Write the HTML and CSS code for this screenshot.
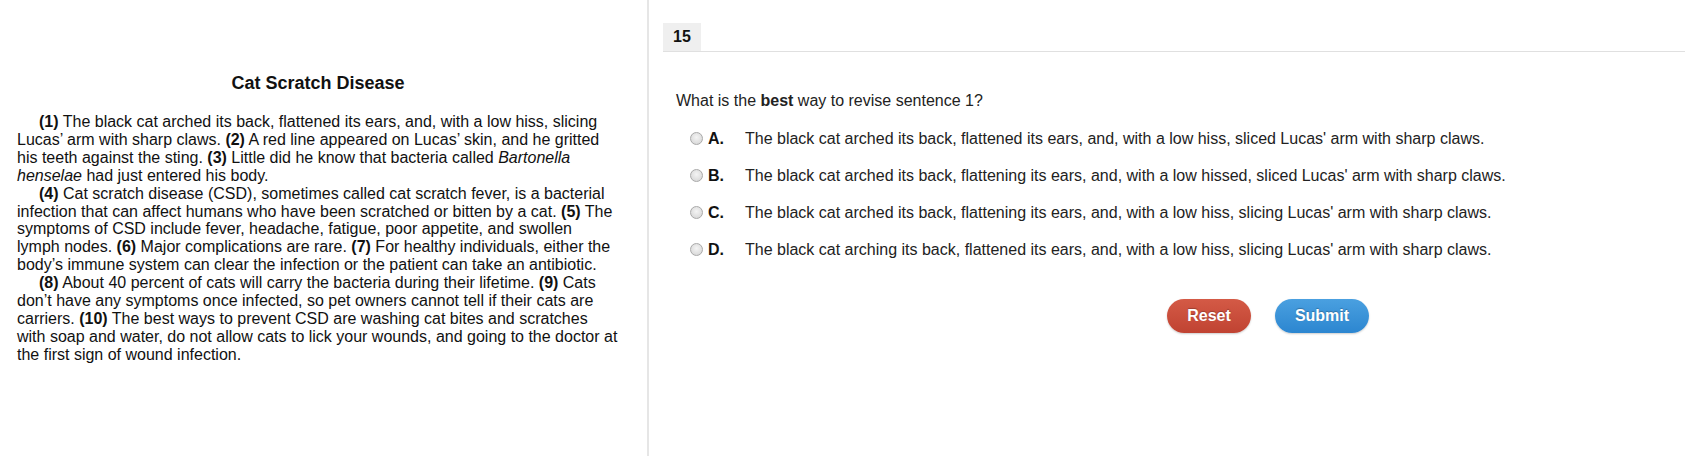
FILE: index.html
```html
<!DOCTYPE html>
<html>
<head>
<meta charset="utf-8">
<link rel="stylesheet" href="styles.css">
</head>
<body>
<div class="page">
  <section class="passage">
    <h1 class="title">Cat Scratch Disease</h1>
    <p class="para"><b>(1)</b> The black cat arched its back, flattened its ears, and, with a low hiss, slicing Lucas’ arm with sharp claws. <b>(2)</b> A red line appeared on Lucas’ skin, and he gritted his teeth against the sting. <b>(3)</b> Little did he know that bacteria called <i>Bartonella henselae</i> had just entered his body.</p>
    <p class="para"><b>(4)</b> Cat scratch disease (CSD), sometimes called cat scratch fever, is a bacterial infection that can affect humans who have been scratched or bitten by a cat. <b>(5)</b> The symptoms of CSD include fever, headache, fatigue, poor appetite, and swollen lymph nodes. <b>(6)</b> Major complications are rare. <b>(7)</b> For healthy individuals, either the body’s immune system can clear the infection or the patient can take an antibiotic.</p>
    <p class="para"><b>(8)</b> About 40 percent of cats will carry the bacteria during their lifetime. <b>(9)</b> Cats don’t have any symptoms once infected, so pet owners cannot tell if their cats are carriers. <b>(10)</b> The best ways to prevent CSD are washing cat bites and scratches with soap and water, do not allow cats to lick your wounds, and going to the doctor at the first sign of wound infection.</p>
  </section>
  <section class="question">
    <div class="tabbar"><div class="tab">15</div></div>
    <p class="prompt">What is the <b>best</b> way to revise sentence 1?</p>
    <div class="options">
      <label class="option"><span class="radio"></span><span class="letter">A.</span><span class="otext">The black cat arched its back, flattened its ears, and, with a low hiss, sliced Lucas' arm with sharp claws.</span></label>
      <label class="option"><span class="radio"></span><span class="letter">B.</span><span class="otext">The black cat arched its back, flattening its ears, and, with a low hissed, sliced Lucas' arm with sharp claws.</span></label>
      <label class="option"><span class="radio"></span><span class="letter">C.</span><span class="otext">The black cat arched its back, flattening its ears, and, with a low hiss, slicing Lucas' arm with sharp claws.</span></label>
      <label class="option"><span class="radio"></span><span class="letter">D.</span><span class="otext">The black cat arching its back, flattened its ears, and, with a low hiss, slicing Lucas' arm with sharp claws.</span></label>
    </div>
    <div class="actions">
      <button class="btn reset">Reset</button>
      <button class="btn submit">Submit</button>
    </div>
  </section>
</div>
</body>
</html>
```

FILE: styles.css
```css
html, body {
  margin: 0;
  padding: 0;
  background: #fff;
}
body {
  font-family: "Liberation Sans", Arial, sans-serif;
  font-size: 16px;
  color: #111;
}
.page {
  display: flex;
  height: 456px;
}
.passage {
  width: 649px;
  box-sizing: border-box;
  padding: 0 28px 0 17px;
  border-right: 2px solid #e6e6e6;
}
.title {
  margin: 73px 0 0;
  font-size: 18px;
  line-height: 20px;
  font-weight: bold;
  text-align: center;
  color: #111;
}
.para {
  margin: 0;
  text-indent: 22px;
  line-height: 17.9px;
}
.title + .para {
  margin-top: 20px;
}
.question {
  flex: 1;
  padding-left: 14px;
}
.tabbar {
  margin-top: 23px;
  border-bottom: 1px solid #e0e0e0;
  display: flex;
}
.tab {
  width: 38px;
  height: 28px;
  background: #efefef;
  font-weight: bold;
  font-size: 16px;
  line-height: 28px;
  text-align: center;
  color: #111;
}
.prompt {
  margin: 40px 0 0 13px;
  line-height: 18px;
  color: #222;
}
.options {
  margin-top: 10px;
  display: flex;
  flex-direction: column;
}
.option {
  display: flex;
  align-items: center;
  height: 37px;
  color: #222;
}
.radio {
  width: 11px;
  height: 11px;
  margin-left: 27px;
  border-radius: 50%;
  border: 1px solid #a9a9a9;
  background: radial-gradient(circle at 50% 40%, #f4f4f4 0%, #dcdcdc 70%, #cfcfcf 100%);
}
.letter {
  margin-left: 5px;
  width: 37px;
  font-weight: bold;
  color: #111;
}
.otext {
  white-space: nowrap;
}
.actions {
  display: flex;
  gap: 24px;
  margin: 31px 0 0 504px;
}
.btn {
  height: 34px;
  border: none;
  border-radius: 17px;
  font-family: "Liberation Sans", Arial, sans-serif;
  font-size: 16px;
  font-weight: bold;
  color: #fff;
  text-shadow: 0 -1px 1px rgba(0,0,0,0.25);
  padding: 0;
  cursor: pointer;
}
.reset {
  width: 84px;
  background: linear-gradient(#d45a46, #c04332);
  box-shadow: 0 1px 2px rgba(0,0,0,0.2);
}
.submit {
  width: 94px;
  background: linear-gradient(#4aa0e0, #2c86d0);
  box-shadow: 0 1px 2px rgba(0,0,0,0.2);
}
```
